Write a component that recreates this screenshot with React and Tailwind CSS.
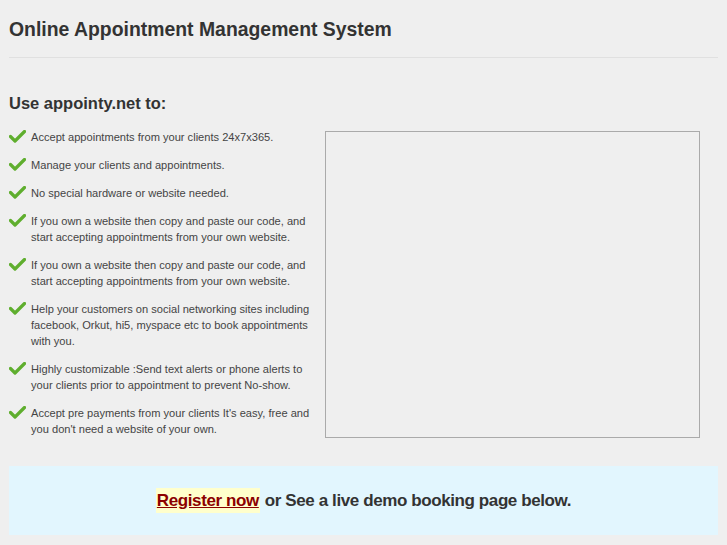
const features = [
  "Accept appointments from your clients 24x7x365.",
  "Manage your clients and appointments.",
  "No special hardware or website needed.",
  "If you own a website then copy and paste our code, and start accepting appointments from your own website.",
  "If you own a website then copy and paste our code, and start accepting appointments from your own website.",
  "Help your customers on social networking sites including facebook, Orkut, hi5, myspace etc to book appointments with you.",
  "Highly customizable :Send text alerts or phone alerts to your clients prior to appointment to prevent No-show.",
  "Accept pre payments from your clients It's easy, free and you don't need a website of your own.",
];

function Check() {
  return (
    <svg width="17" height="13" viewBox="0 0 17 13" className="shrink-0 mt-[1px]">
      <path d="M1.5 6.5 L6 11 L15.5 1.5" fill="none" stroke="#5fae2e" strokeWidth="3.2" strokeLinecap="round" strokeLinejoin="round" />
    </svg>
  );
}

export default function App() {
  return (
    <div className="min-h-[545px] bg-[#efefef] text-[#333] font-['Liberation_Sans',Arial,sans-serif]">
      <div className="w-[709px] ml-[9px]">
        <h1 className="pt-[18px] text-[19.4px] leading-[22px] font-bold text-[#333]">
          Online Appointment Management System
        </h1>
        <div className="mt-[17px] h-px bg-[#e0e0e0]" />

        <h2 className="mt-[35px] text-[16.5px] leading-[20px] font-bold text-[#333]">Use appointy.net to:</h2>

        <div className="flex mt-[16px]">
          <ul className="w-[306px] flex flex-col gap-[12px]">
            {features.map((f, i) => (
              <li key={i} className="flex gap-[5px] text-[11.1px] leading-[16px] text-[#444]">
                <Check />
                <span>{f}</span>
              </li>
            ))}
          </ul>
          <div className="ml-[10px] mt-[2px] w-[375px] h-[307px] border border-[#aaa]" />
        </div>

        <div className="mt-[28px] h-[69px] bg-[#e2f6fe] flex items-center justify-center text-[17px] tracking-[-0.4px] font-bold text-[#333]">
          <a href="#" className="bg-[#ffffcc] text-[#8b0000] underline px-px">Register now</a>
          <span className="ml-[5px]">or See a live demo booking page below.</span>
        </div>
      </div>
    </div>
  );
}
